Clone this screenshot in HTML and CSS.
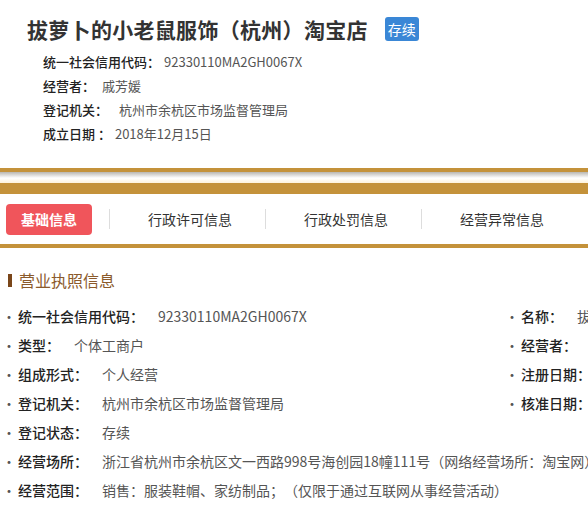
FILE: index.html
```html
<!DOCTYPE html>
<html lang="zh-CN">
<head>
    <meta charset="UTF-8">
    <meta name="viewport" content="width=device-width, initial-scale=1.0">
    <link rel="stylesheet" href="styles.css">
    <title>拔萝卜的小老鼠服饰（杭州）淘宝店</title>
</head>
<body>
<div class="page">
    <div class="head">
        <div class="title-row">
            <h1 class="title">拔萝卜的小老鼠服饰（杭州）淘宝店</h1>
            <span class="badge">存续</span>
        </div>
        <ul class="summary">
            <li><b>统一社会信用代码：</b><span class="v v1">92330110MA2GH0067X</span></li>
            <li><b>经营者：</b><span class="v v2">戚芳媛</span></li>
            <li><b>登记机关：</b><span class="v v3">杭州市余杭区市场监督管理局</span></li>
            <li><b>成立日期 ：</b><span class="v v4">2018年12月15日</span></li>
        </ul>
    </div>

    <div class="bars">
        <div class="bar thin"></div>
        <div class="shade"></div>
        <div class="bar thick"></div>
    </div>

    <nav class="tabs">
        <span class="tab active">基础信息</span>
        <span class="sep first"></span>
        <span class="tab">行政许可信息</span>
        <span class="sep"></span>
        <span class="tab">行政处罚信息</span>
        <span class="sep"></span>
        <span class="tab">经营异常信息</span>
    </nav>
    <div class="bar thin"></div>

    <section class="license">
        <h2 class="section-title">营业执照信息</h2>
        <div class="grid">
            <div class="item"><b>统一社会信用代码：</b><span>92330110MA2GH0067X</span></div>
            <div class="item"><b>名称：</b><span>拔萝卜的小老鼠服饰（杭州）淘宝店</span></div>
            <div class="item"><b>类型：</b><span>个体工商户</span></div>
            <div class="item"><b>经营者：</b><span>戚芳媛</span></div>
            <div class="item"><b>组成形式：</b><span>个人经营</span></div>
            <div class="item"><b>注册日期：</b><span>2018年12月15日</span></div>
            <div class="item"><b>登记机关：</b><span>杭州市余杭区市场监督管理局</span></div>
            <div class="item"><b>核准日期：</b><span>2018年12月15日</span></div>
            <div class="item wide"><b>登记状态：</b><span>存续</span></div>
            <div class="item wide"><b>经营场所：</b><span>浙江省杭州市余杭区文一西路998号海创园18幢111号（网络经营场所：淘宝网）</span></div>
            <div class="item wide"><b>经营范围：</b><span>销售：服装鞋帽、家纺制品；（仅限于通过互联网从事经营活动）</span></div>
        </div>
    </section>
</div>
</body>
</html>
```

FILE: styles.css
```css
html, body {
    margin: 0;
    overflow: hidden;
    background: #fff;
}

body {
    font-family: "Noto Sans CJK SC", "Noto Sans", sans-serif;
    color: #333;
}

.page {
    width: 800px;
}

.head {
    padding: 14px 0 22px;
}

.title-row {
    display: flex;
    align-items: center;
    padding-left: 27px;
    height: 30px;
}

.title {
    margin: 0;
    font-size: 21px;
    font-weight: bold;
    color: #333;
    letter-spacing: 0.3px;
}

.badge {
    margin-left: 17px;
    background: #3a87d6;
    color: #fff;
    font-size: 14px;
    line-height: 24px;
    padding: 0 3px;
    border-radius: 3px;
}

.summary {
    list-style: none;
    margin: 6px 0 0;
    padding-left: 43px;
}

.summary li {
    font-size: 13px;
    line-height: 24px;
    color: #222;
}

.summary b {
    font-weight: 500;
}

.summary .v {
    color: #555;
}

.v1 { margin-left: 4px; }
.v2 { margin-left: 7px; }
.v3 { margin-left: 11px; }
.v4 { margin-left: 4px; }

.bar {
    background: #c4923a;
}

.bar.thin {
    height: 4px;
}

.bar.thick {
    height: 11px;
}

.shade {
    height: 11px;
    background: linear-gradient(#b9b6b0, #fff 55%, #fdf3dc);
}

.tabs {
    display: flex;
    align-items: center;
    height: 50px;
    padding-left: 6px;
}

.tab {
    font-size: 14px;
    color: #333;
    white-space: nowrap;
    padding: 0 10px;
}

.tab.active {
    background: #f0555b;
    color: #fff;
    font-weight: bold;
    border-radius: 4px;
    line-height: 31px;
    padding: 0 15px;
}

.sep {
    width: 1px;
    height: 20px;
    background: #ddd;
    margin: 0 28px 0 23px;
}

.sep.first {
    margin-left: 17px;
}

.license {
    padding-top: 26px;
}

.section-title {
    margin: 0 0 15px 8px;
    padding-left: 7px;
    border-left: 4px solid #7a461a;
    font-size: 16px;
    font-weight: normal;
    color: #8b5a2b;
    line-height: 13px;
    height: 13px;
    display: flex;
    align-items: center;
}

.grid {
    display: grid;
    grid-template-columns: 503px 1fr;
}

.item {
    font-size: 14px;
    line-height: 29px;
    white-space: nowrap;
    color: #555;
}

.item::before {
    content: "·";
    display: inline-block;
    width: 18px;
    text-align: center;
    color: #555;
}

.item b {
    color: #222;
    font-weight: 500;
}

.item span {
    margin-left: 14px;
    text-spacing-trim: space-all;
}

.item.wide {
    grid-column: 1 / 3;
}
```
